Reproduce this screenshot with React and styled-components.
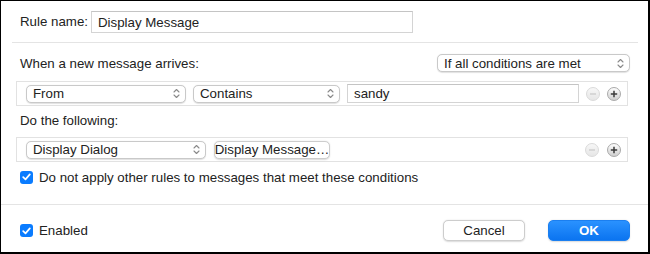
import React from 'react';
import styled, { createGlobalStyle } from 'styled-components';

const GlobalStyle = createGlobalStyle`
  html, body {
    margin: 0;
    padding: 0;
    background: #fff;
  }
  body {
    font-family: "Liberation Sans", Arial, sans-serif;
    font-size: 13.3px;
    color: #222;
  }
`;

const Dialog = styled.div`
  box-sizing: border-box;
  width: 650px;
  height: 254px;
  border-style: solid;
  border-color: #000;
  border-width: 1px 2px 2px 1px;
  background: #fff;
  display: flex;
  flex-direction: column;
`;

const NameRow = styled.div`
  box-sizing: border-box;
  height: 41px;
  padding: 10px 0 0 19px;
  display: flex;
  align-items: flex-start;
`;

const Label = styled.span`
  width: ${(p) => p.width || 'auto'};
  height: 22px;
  line-height: 22px;
  white-space: nowrap;
`;

const TextField = styled.div`
  box-sizing: border-box;
  width: ${(p) => p.width}px;
  height: ${(p) => p.height}px;
  border: 1px solid #d4d4d4;
  border-top-color: #c4c4c4;
  background: #fff;
  padding: 0 6px;
  display: flex;
  align-items: center;
  white-space: nowrap;
`;

const Divider = styled.div`
  height: 1px;
  background: #e4e4e4;
  margin: ${(p) => p.margin || '0'};
  flex-shrink: 0;
`;

const HeadingRow = styled.div`
  box-sizing: border-box;
  height: 18px;
  margin-top: ${(p) => p.top}px;
  padding: 0 18px 0 19px;
  display: flex;
  align-items: center;
  justify-content: space-between;
`;

const RuleBox = styled.div`
  box-sizing: border-box;
  width: 612px;
  height: 25px;
  margin: ${(p) => p.top}px 0 0 15px;
  border: 1px solid #e2e2e2;
  padding: 0 6px 0 9px;
  display: flex;
  align-items: center;
  gap: ${(p) => p.gap || 7}px;
`;

const PopupBox = styled.div`
  box-sizing: border-box;
  width: ${(p) => p.width}px;
  height: 18px;
  border: 1px solid #c9c9c9;
  border-radius: 5px;
  background: #fff;
  box-shadow: 0 0.5px 1px rgba(0, 0, 0, 0.12);
  padding: 0 5px 0 6px;
  display: flex;
  align-items: center;
  justify-content: space-between;
  white-space: nowrap;
`;

const PushButton = styled.div`
  box-sizing: border-box;
  width: ${(p) => p.width}px;
  height: ${(p) => p.height || 18}px;
  border-radius: 5px;
  display: flex;
  align-items: center;
  justify-content: center;
  white-space: nowrap;
  border: 1px solid ${(p) => (p.primary ? '#1b7ff0' : '#cdcdcd')};
  background: ${(p) =>
    p.primary ? 'linear-gradient(#2a92ff, #0b74f0)' : '#fff'};
  color: ${(p) => (p.primary ? '#fff' : '#222')};
  font-weight: ${(p) => (p.primary ? 'bold' : 'normal')};
  box-shadow: 0 0.5px 1.5px rgba(0, 0, 0, 0.15);
`;

const Circle = styled.div`
  box-sizing: border-box;
  width: 14px;
  height: 14px;
  border-radius: 50%;
  display: flex;
  align-items: center;
  justify-content: center;
  flex-shrink: 0;
  margin-left: ${(p) => (p.auto ? 'auto' : '0')};
  border: 1px solid ${(p) => (p.disabled ? '#dadada' : '#a9a9a9')};
  background: ${(p) =>
    p.disabled
      ? 'linear-gradient(#f7f7f7, #e6e6e6)'
      : 'linear-gradient(#fdfdfd, #cfcfcf)'};
`;

const CheckRow = styled.div`
  box-sizing: border-box;
  height: ${(p) => p.height || 16}px;
  margin-top: ${(p) => p.top || 0}px;
  padding-left: 19px;
  display: flex;
  align-items: center;
  gap: 6px;
  white-space: nowrap;
`;

const CheckBox = styled.div`
  box-sizing: border-box;
  width: 13px;
  height: 13px;
  border-radius: 3px;
  background: #0a7cff;
  display: flex;
  align-items: center;
  justify-content: center;
`;

const Footer = styled.div`
  box-sizing: border-box;
  flex: 1;
  padding: 15px 18px 0 0;
  display: flex;
  align-items: flex-start;
`;

const Buttons = styled.div`
  margin-left: auto;
  display: flex;
  gap: 23px;
`;

const Chevrons = () => (
  <svg width="7" height="11" viewBox="0 0 7 11">
    <path
      d="M1 4 L3.5 1.5 L6 4 M1 7 L3.5 9.5 L6 7"
      fill="none"
      stroke="#8a8a8a"
      strokeWidth="1.1"
      strokeLinecap="round"
      strokeLinejoin="round"
    />
  </svg>
);

const Popup = ({ width, children }) => (
  <PopupBox width={width}>
    <span>{children}</span>
    <Chevrons />
  </PopupBox>
);

const Check = ({ children, top, height }) => (
  <CheckRow top={top} height={height}>
    <CheckBox>
      <svg width="9" height="8" viewBox="0 0 9 8">
        <path
          d="M1.2 4.2 L3.5 6.4 L7.8 1.4"
          fill="none"
          stroke="#fff"
          strokeWidth="1.7"
          strokeLinecap="round"
          strokeLinejoin="round"
        />
      </svg>
    </CheckBox>
    <span>{children}</span>
  </CheckRow>
);

const MinusPlus = () => (
  <>
    <Circle disabled auto>
      <svg width="8" height="8" viewBox="0 0 8 8">
        <path d="M1 4 H7" stroke="#cdcdcd" strokeWidth="1.4" />
      </svg>
    </Circle>
    <Circle>
      <svg width="8" height="8" viewBox="0 0 8 8">
        <path d="M0.8 4 H7.2 M4 0.8 V7.2" stroke="#3a3a3a" strokeWidth="1.5" />
      </svg>
    </Circle>
  </>
);

export default function App() {
  return (
    <>
      <GlobalStyle />
      <Dialog>
        <NameRow>
          <Label width="71px">Rule name:</Label>
          <TextField width={322} height={22}>
            Display Message
          </TextField>
        </NameRow>
        <Divider margin="0 10px 0 11px" />

        <HeadingRow top={11}>
          <span>When a new message arrives:</span>
          <Popup width={193}>If all conditions are met</Popup>
        </HeadingRow>
        <RuleBox top={9}>
          <Popup width={160}>From</Popup>
          <Popup width={147}>Contains</Popup>
          <TextField width={232} height={19}>
            sandy
          </TextField>
          <MinusPlus />
        </RuleBox>

        <HeadingRow top={5}>
          <span>Do the following:</span>
        </HeadingRow>
        <RuleBox top={8} gap={8}>
          <Popup width={180}>Display Dialog</Popup>
          <PushButton width={116}>Display Message…</PushButton>
          <MinusPlus />
        </RuleBox>

        <Check top={7}>
          Do not apply other rules to messages that meet these conditions
        </Check>

        <Divider margin="19px 0 0 0" />

        <Footer>
          <Check height={21}>Enabled</Check>
          <Buttons>
            <PushButton width={82} height={21}>
              Cancel
            </PushButton>
            <PushButton width={82} height={21} primary>
              OK
            </PushButton>
          </Buttons>
        </Footer>
      </Dialog>
    </>
  );
}
